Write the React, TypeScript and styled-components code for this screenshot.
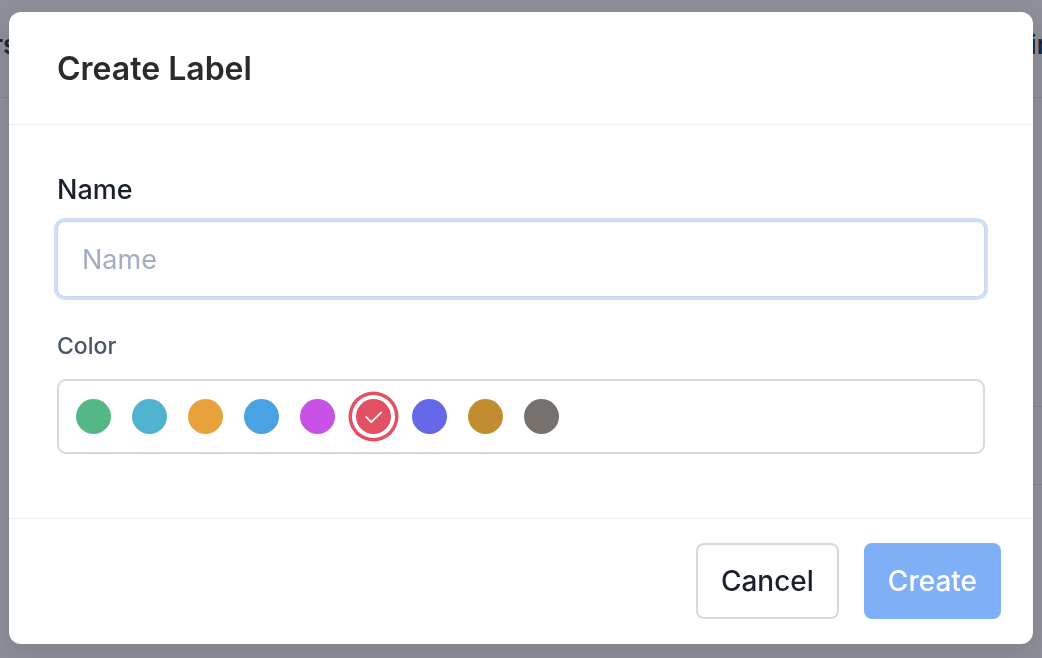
import React, { useState } from 'react';
import styled, { createGlobalStyle } from 'styled-components';

const GlobalStyle = createGlobalStyle`
  * { box-sizing: border-box; }
  html, body { margin: 0; padding: 0; }
  body {
    font-family: Inter, "Noto Sans", "Liberation Sans", sans-serif;
    background: #ffffff;
    color: #1a202c;
  }
`;

const Page = styled.div`
  width: 1042px;
  height: 658px;
  overflow: hidden;
`;

const TopBar = styled.header`
  height: 98px;
  display: flex;
  align-items: center;
  justify-content: space-between;
  border-bottom: 1px solid #e2e8f0;
  font-size: 26px;
  font-weight: 600;
  color: #2d3748;
`;

const BarText = styled.span<{ $shift: number }>`
  margin-top: -8px;
  transform: translateX(${(p) => p.$shift}px);
`;

const Table = styled.div`
  margin: 308px 0 0 40px;
`;

const TableRow = styled.div`
  height: 78px;
  border-top: 1px solid #e2e8f0;
`;

const Overlay = styled.div`
  position: fixed;
  inset: 0;
  background: rgba(17, 24, 39, 0.48);
  display: flex;
  align-items: flex-start;
  justify-content: center;
  padding-top: 12px;
`;

const Modal = styled.section`
  width: 1024px;
  height: 632px;
  background: #ffffff;
  border-radius: 12px;
  display: flex;
  flex-direction: column;
  box-shadow: 0 10px 30px rgba(0, 0, 0, 0.12);
`;

const Header = styled.div`
  height: 113px;
  padding: 0 48px;
  display: flex;
  align-items: center;
  border-bottom: 1px solid #edf0f3;
`;

const Title = styled.h2`
  margin: 0;
  font-size: 32px;
  font-weight: 600;
  color: #2b2b2b;
`;

const Body = styled.div`
  flex: 1;
  padding: 48px 48px 0;
  display: flex;
  flex-direction: column;
`;

const Field = styled.div`
  display: flex;
  flex-direction: column;
`;

const Label = styled.label<{ $muted?: boolean }>`
  font-size: ${(p) => (p.$muted ? '23px' : '27px')};
  font-weight: 500;
  color: ${(p) => (p.$muted ? '#4a5568' : '#1a202c')};
  line-height: 34px;
  margin-bottom: ${(p) => (p.$muted ? '16px' : '14px')};
`;

const Input = styled.input`
  height: 76px;
  width: 100%;
  border: 1px solid #cfd6e0;
  border-radius: 8px;
  padding: 0 24px;
  font-family: inherit;
  font-size: 27px;
  color: #1a202c;
  outline: none;
  box-shadow: 0 0 0 3px #cde0f6;
  margin-bottom: 32px;

  &::placeholder {
    color: #a0aec0;
  }
`;

const Swatches = styled.div`
  height: 75px;
  border: 2px solid #d6dae0;
  border-radius: 9px;
  display: flex;
  align-items: center;
  gap: 21px;
  padding: 0 17px;
`;

const Swatch = styled.button<{ $color: string; $selected: boolean }>`
  width: 35px;
  height: 35px;
  flex: 0 0 35px;
  border-radius: 50%;
  border: none;
  padding: 0;
  background: ${(p) => p.$color};
  display: flex;
  align-items: center;
  justify-content: center;
  cursor: pointer;
  box-shadow: ${(p) =>
    p.$selected ? `0 0 0 4px #ffffff, 0 0 0 7.5px ${p.$color}` : 'none'};
`;

const Footer = styled.div`
  height: 126px;
  border-top: 1px solid #edf0f3;
  display: flex;
  justify-content: flex-end;
  align-items: flex-start;
  gap: 25px;
  padding: 24px 32px 0;
`;

const Button = styled.button<{ $primary?: boolean }>`
  height: 76px;
  padding: 0 ${(p) => (p.$primary ? '24px' : '23px')};
  border-radius: 8px;
  font-family: inherit;
  font-size: 28px;
  font-weight: 500;
  cursor: pointer;
  border: ${(p) => (p.$primary ? 'none' : '2px solid #d5d9df')};
  background: ${(p) => (p.$primary ? '#7fb0f7' : '#ffffff')};
  color: ${(p) => (p.$primary ? '#ffffff' : '#1a202c')};
`;

const colors = [
  '#54b886',
  '#51b2cf',
  '#e9a13c',
  '#4ba2e3',
  '#c952e6',
  '#e25064',
  '#6568e8',
  '#c28c31',
  '#77716d',
];

const Check = () => (
  <svg width="22" height="22" viewBox="0 0 24 24" fill="none" stroke="#fff" strokeWidth="1.9" strokeLinecap="round" strokeLinejoin="round">
    <polyline points="3.5 12 9 17.5 20 7" />
  </svg>
);

export default function App() {
  const [selected, setSelected] = useState(5);

  return (
    <Page>
      <GlobalStyle />
      <TopBar>
        <BarText $shift={-56}>Users</BarText>
        <BarText $shift={5}>Chair</BarText>
      </TopBar>
      <Table>
        <TableRow />
        <TableRow />
      </Table>
      <Overlay>
        <Modal>
          <Header>
            <Title>Create Label</Title>
          </Header>
          <Body>
            <Field>
              <Label>Name</Label>
              <Input placeholder="Name" />
            </Field>
            <Field>
              <Label $muted>Color</Label>
              <Swatches>
                {colors.map((c, i) => (
                  <Swatch
                    key={c}
                    $color={c}
                    $selected={i === selected}
                    onClick={() => setSelected(i)}
                  >
                    {i === selected && <Check />}
                  </Swatch>
                ))}
              </Swatches>
            </Field>
          </Body>
          <Footer>
            <Button>Cancel</Button>
            <Button $primary>Create</Button>
          </Footer>
        </Modal>
      </Overlay>
    </Page>
  );
}
